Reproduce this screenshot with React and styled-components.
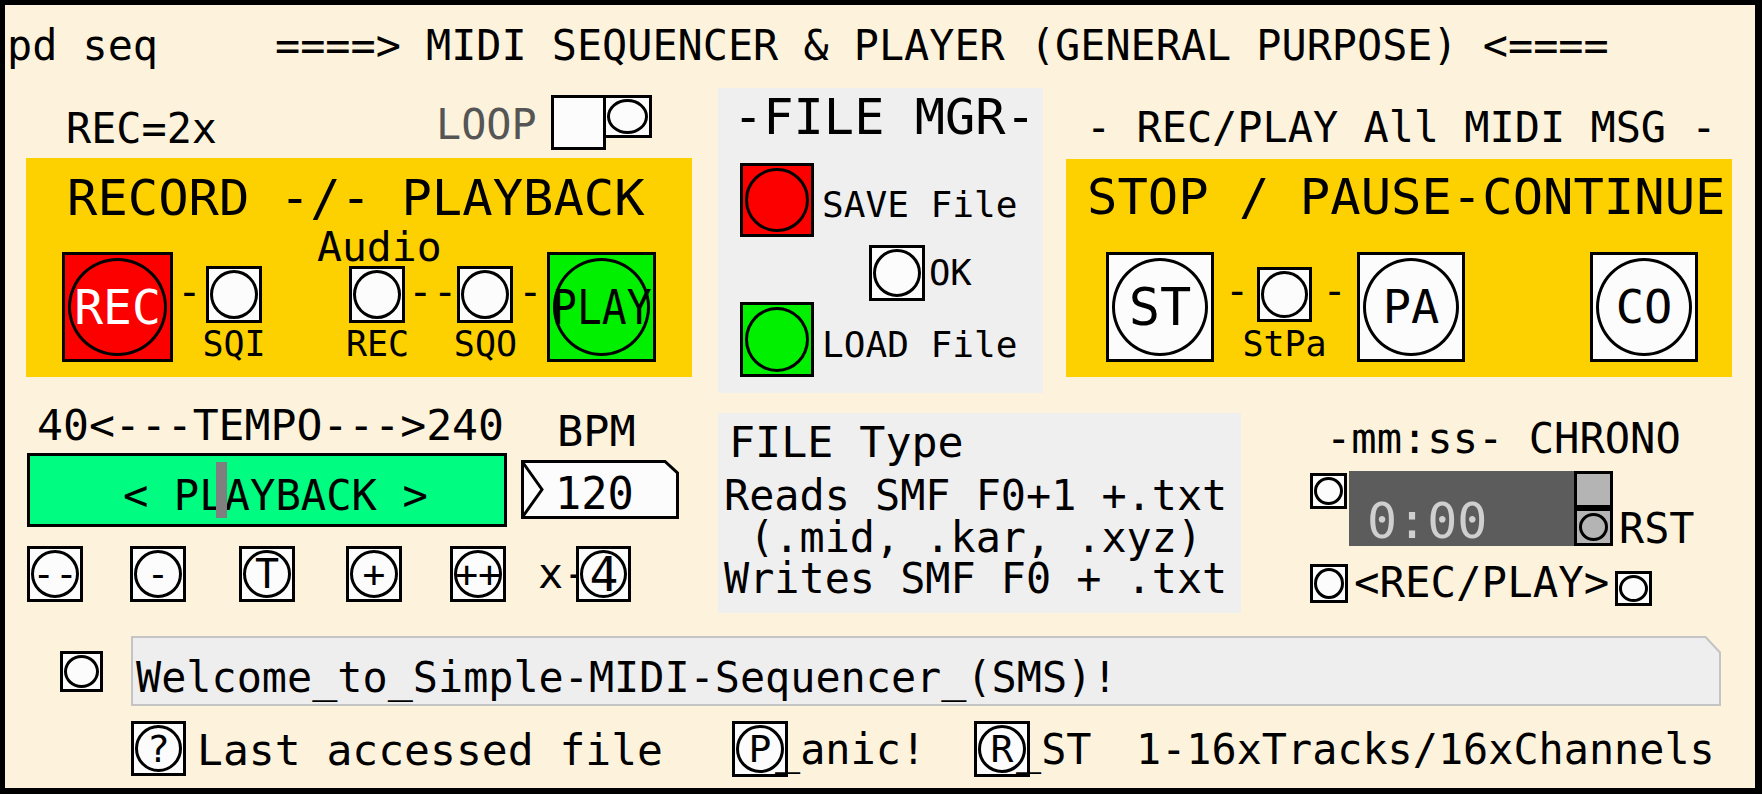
import React from "react";
import styled, { createGlobalStyle } from "styled-components";

const GlobalStyle = createGlobalStyle`
  html, body {
    margin: 0;
    padding: 0;
    background: #fdf3dc;
  }
`;

const mono = `"DejaVu Sans Mono", "Liberation Mono", monospace`;

// every part of the patch sits in flow; small nudges come in as $mt / $ml
const offset = (p) => `margin: ${p.$mt || 0}px 0 0 ${p.$ml || 0}px;`;

const Patch = styled.div`
  width: 1762px;
  height: 794px;
  box-sizing: border-box;
  border-style: solid;
  border-color: #000;
  border-width: 5px 7px 6px 5px;
  background: #fdf3dc;
  color: #000;
  font-family: ${mono};
  display: flex;
  flex-direction: column;
  overflow: hidden;
`;

const Row = styled.div`
  display: flex;
  align-items: flex-start;
  flex-shrink: 0;
  height: ${(p) => p.$h}px;
  ${offset}
`;

const Col = styled.div`
  display: flex;
  flex-direction: column;
  align-items: flex-start;
  flex-shrink: 0;
  width: ${(p) => p.$w}px;
  ${offset}
`;

const Text = styled.div`
  flex-shrink: 0;
  white-space: pre;
  font-size: ${(p) => p.$size || 41.8}px;
  line-height: ${(p) => p.$lh || p.$size || 41.8}px;
  color: ${(p) => p.$color || "#000"};
  ${offset}
`;

const Panel = styled.div`
  flex-shrink: 0;
  box-sizing: border-box;
  width: ${(p) => p.$w}px;
  height: ${(p) => p.$h}px;
  background: ${(p) => p.$bg};
  display: flex;
  flex-direction: column;
  align-items: flex-start;
  ${offset}
`;

const BangBox = styled.div`
  flex-shrink: 0;
  box-sizing: border-box;
  width: ${(p) => p.$w}px;
  height: ${(p) => p.$h}px;
  border: 3px solid #000;
  background: ${(p) => p.$fill};
  padding: ${(p) => p.$inset}px;
  display: flex;
  ${offset}
`;

const BangDot = styled.div`
  flex: 1;
  min-width: 0;
  box-sizing: border-box;
  border: 3px solid #000;
  border-radius: 50%;
  background: ${(p) => p.$fill};
  display: flex;
  align-items: center;
  justify-content: center;
  white-space: pre;
  font-size: ${(p) => p.$size}px;
  line-height: 1;
  color: ${(p) => p.$color};
`;

const Caption = styled.span`
  display: inline-block;
  flex-shrink: 0;
  transform: scaleX(${(p) => p.$sx || 1});
`;

function Bang({ w, h, fill = "#fcfcfc", inset = 1, size = 38, color = "#000", sx, mt, ml, children }) {
  return (
    <BangBox $w={w} $h={h} $fill={fill} $inset={inset} $mt={mt} $ml={ml}>
      <BangDot $fill={fill} $size={size} $color={color}>
        {children && <Caption $sx={sx}>{children}</Caption>}
      </BangDot>
    </BangBox>
  );
}

const Toggle = styled.div`
  flex-shrink: 0;
  box-sizing: border-box;
  width: ${(p) => p.$w}px;
  height: ${(p) => p.$h}px;
  border: 3px solid #000;
  background: ${(p) => p.$fill || "#fcfcfc"};
  ${offset}
`;

const BangGroup = styled.div`
  flex-shrink: 0;
  display: flex;
  flex-direction: column;
  align-items: center;
  width: ${(p) => p.$w}px;
  ${offset}
`;

const Slider = styled.div`
  position: relative;
  flex-shrink: 0;
  box-sizing: border-box;
  width: 480px;
  height: 74px;
  border: 3px solid #000;
  background: #00fc80;
  display: flex;
  align-items: flex-start;
`;

const SliderKnob = styled.div`
  position: absolute;
  left: 186px;
  top: 6px;
  width: 11px;
  height: 56px;
  background: #7f7f7f;
`;

const NumBox = styled.div`
  position: relative;
  flex-shrink: 0;
  width: 158px;
  height: 59px;
  display: flex;
  align-items: flex-start;
  ${offset}
`;

const NumOutline = styled.svg`
  position: absolute;
  left: 0;
  top: 0;
`;

const NumValue = styled(Text)`
  position: relative;
`;

const ChronoScreen = styled.div`
  flex-shrink: 0;
  width: 226px;
  height: 75px;
  background: #5c5c5c;
  display: flex;
  align-items: flex-start;
  ${offset}
`;

const MsgFrame = styled.div`
  flex-shrink: 0;
  box-sizing: border-box;
  width: 1590px;
  height: 70px;
  padding: 2px;
  background: #c4c4c4;
  clip-path: polygon(0 0, calc(100% - 15px) 0, 100% 16px, 100% 100%, 0 100%);
  ${offset}
`;

const MsgFace = styled.div`
  height: 100%;
  background: #eeeeee;
  display: flex;
  align-items: flex-start;
  clip-path: polygon(0 0, calc(100% - 14px) 0, 100% 15px, 100% 100%, 0 100%);
`;

export default function App() {
  return (
    <>
      <GlobalStyle />
      <Patch>
        <Row $h={42} $mt={20}>
          <Text $ml={2}>pd seq</Text>
          <Text $ml={117}>====&gt; MIDI SEQUENCER &amp; PLAYER (GENERAL PURPOSE) &lt;====</Text>
        </Row>

        <Row $h={305} $mt={21} $ml={21}>
          <Col $w={666}>
            <Row $h={70}>
              <Text $ml={40} $mt={19.6}>REC=2x</Text>
              <Text $ml={219} $mt={15.6} $color="#555">LOOP</Text>
              <Toggle $w={55} $h={55} $ml={14.3} $mt={7} />
              <Bang w={49} h={43} ml={-3} mt={7} />
            </Row>
            <Panel $w={666} $h={219} $bg="#fdd000">
              <Text $size={50.5} $ml={41} $mt={15.3}>RECORD -/- PLAYBACK</Text>
              <Text $size={41.4} $ml={291} $mt={3.2}>Audio</Text>
              <Row $h={111} $mt={-16.3}>
                <Bang w={111} h={110} fill="#fc0000" inset={3} size={48} color="#fff" ml={36}>REC</Bang>
                <Text $size={41} $ml={4} $mt={19.5}>-</Text>
                <BangGroup $w={63} $ml={0.8} $mt={14}>
                  <Bang w={56} h={57} />
                  <Text $size={35} $mt={4.4}>SQI</Text>
                </BangGroup>
                <BangGroup $w={63} $ml={80.5} $mt={14}>
                  <Bang w={56} h={57} />
                  <Text $size={35} $mt={4.4}>REC</Text>
                </BangGroup>
                <Text $size={41} $ml={-1} $mt={19.5}>--</Text>
                <BangGroup $w={63} $ml={-3.4} $mt={14}>
                  <Bang w={56} h={57} />
                  <Text $size={35} $mt={4.4}>SQO</Text>
                </BangGroup>
                <Text $size={41} $ml={1} $mt={19.5}>-</Text>
                <Bang w={109} h={110} fill="#00f000" inset={3} size={48} sx={0.86} ml={4.3}>PLAY</Bang>
              </Row>
            </Panel>
          </Col>

          <Panel $w={325} $h={305} $bg="#efefef" $ml={26}>
            <Text $size={50.3} $ml={15} $mt={4.4}>-FILE MGR-</Text>
            <Row $h={74} $ml={22} $mt={20.3}>
              <Bang w={74} h={74} fill="#fc0000" inset={2} />
              <Text $size={36.1} $ml={8} $mt={24.5}>SAVE File</Text>
            </Row>
            <Row $h={56} $ml={151} $mt={8}>
              <Bang w={56} h={56} />
              <Text $size={35.5} $ml={4} $mt={10.5}>OK</Text>
            </Row>
            <Row $h={75} $ml={22} $mt={1}>
              <Bang w={74} h={75} fill="#00f000" inset={2} />
              <Text $size={36.1} $ml={8} $mt={25.5}>LOAD File</Text>
            </Row>
          </Panel>

          <Col $w={666} $ml={23}>
            <Text $size={41.9} $ml={20} $mt={18.6}>- REC/PLAY All MIDI MSG -</Text>
            <Panel $w={666} $h={218} $bg="#fdd000" $mt={10.5}>
              <Text $size={50.5} $ml={21} $mt={13.3}>STOP / PAUSE-CONTINUE</Text>
              <Row $h={111} $mt={29.2}>
                <Bang w={108} h={110} inset={3} size={52} ml={40}>ST</Bang>
                <Text $size={41} $ml={10.7} $mt={19.5}>-</Text>
                <BangGroup $w={84.3} $ml={-7} $mt={15}>
                  <Bang w={55} h={55} />
                  <Text $size={35} $mt={5}>StPa</Text>
                </BangGroup>
                <Text $size={41} $ml={-4.5} $mt={19.5}>-</Text>
                <Bang w={108} h={110} inset={3} size={47} ml={10.1}>PA</Bang>
                <Bang w={108} h={110} inset={3} size={47} ml={125}>CO</Bang>
              </Row>
            </Panel>
          </Col>
        </Row>

        <Row $h={209} $mt={11} $ml={22}>
          <Col $w={652}>
            <Row $h={49}>
              <Text $size={43.1} $ml={10}>40&lt;---TEMPO---&gt;240</Text>
              <Text $size={43.5} $ml={53} $mt={6.2}>BPM</Text>
            </Row>
            <Row $h={74}>
              <Slider>
                <Text $size={42.2} $ml={93} $mt={18.5}>&lt; PLAYBACK &gt;</Text>
                <SliderKnob />
              </Slider>
              <NumBox $ml={14} $mt={7}>
                <NumOutline width="158" height="59" viewBox="0 0 158 59">
                  <polygon
                    points="1.5,1.5 144,1.5 156.5,13 156.5,57.5 1.5,57.5"
                    fill="#fcfcfc"
                    stroke="#000"
                    strokeWidth="3"
                  />
                  <polyline points="1.5,2 21,29.5 1.5,57" fill="none" stroke="#000" strokeWidth="3" />
                </NumOutline>
                <NumValue $size={43.6} $ml={34} $mt={13.1}>120</NumValue>
              </NumBox>
            </Row>
            <Row $h={56} $mt={19}>
              <Bang w={56} h={56} size={38}>--</Bang>
              <Bang w={56} h={56} size={38} ml={47}>-</Bang>
              <Bang w={56} h={56} size={40} ml={53}>T</Bang>
              <Bang w={56} h={56} size={38} ml={51}>+</Bang>
              <Bang w={56} h={56} size={38} ml={48}>++</Bang>
              <Text $ml={32} $mt={7}>x-</Text>
              <Bang w={55} h={56} size={48} ml={-12}>4</Bang>
            </Row>
          </Col>

          <Panel $w={523} $h={200} $bg="#efefef" $ml={39} $mt={9}>
            <Text $size={43.3} $ml={11} $mt={8.4}>FILE Type</Text>
            <Text $lh={41.5} $ml={6} $mt={10.4}>
              {"Reads SMF F0+1 +.txt\n (.mid, .kar, .xyz)\nWrites SMF F0 + .txt"}
            </Text>
          </Panel>

          <Col $w={400} $ml={69}>
            <Text $size={42.1} $ml={16} $mt={13.6}>-mm:ss- CHRONO</Text>
            <Row $h={75} $mt={11}>
              <Bang w={37} h={36} mt={2} />
              <ChronoScreen $ml={2}>
                <Text $size={50} $ml={18} $mt={25} $color="#cfcfcf">0:00</Text>
              </ChronoScreen>
              <Col $w={39} $ml={-1}>
                <Toggle $w={39} $h={37} $fill="#b4b4b4" />
                <Bang w={39} h={38} inset={2} fill="#b4b4b4" />
              </Col>
              <Text $ml={6} $mt={37.6}>RST</Text>
            </Row>
            <Row $h={43} $mt={16.4}>
              <Bang w={38} h={39} mt={1.6} />
              <Text $size={42.4} $ml={6}>&lt;REC/PLAY&gt;</Text>
              <Bang w={37} h={35} ml={6} mt={8.6} />
            </Row>
          </Col>
        </Row>

        <Row $h={70} $mt={23}>
          <Bang w={43} h={41} ml={55} mt={15} />
          <MsgFrame $ml={28}>
            <MsgFace>
              <Text $ml={3} $mt={18.7}>Welcome_to_Simple-MIDI-Sequencer_(SMS)!</Text>
            </MsgFace>
          </MsgFrame>
        </Row>

        <Row $h={56} $mt={15}>
          <Bang w={55} h={55} size={38} ml={126}>?</Bang>
          <Text $size={43} $ml={11} $mt={7.8}>Last accessed file</Text>
          <Bang w={56} h={56} size={38} ml={69}>P</Bang>
          <Text $ml={-13} $mt={8.3}>_anic!</Text>
          <Bang w={56} h={56} size={38} ml={48}>R</Bang>
          <Text $ml={-14} $mt={8.3}>_ST</Text>
          <Text $ml={44.5} $mt={8.3}>1-16xTracks/16xChannels</Text>
        </Row>
      </Patch>
    </>
  );
}
